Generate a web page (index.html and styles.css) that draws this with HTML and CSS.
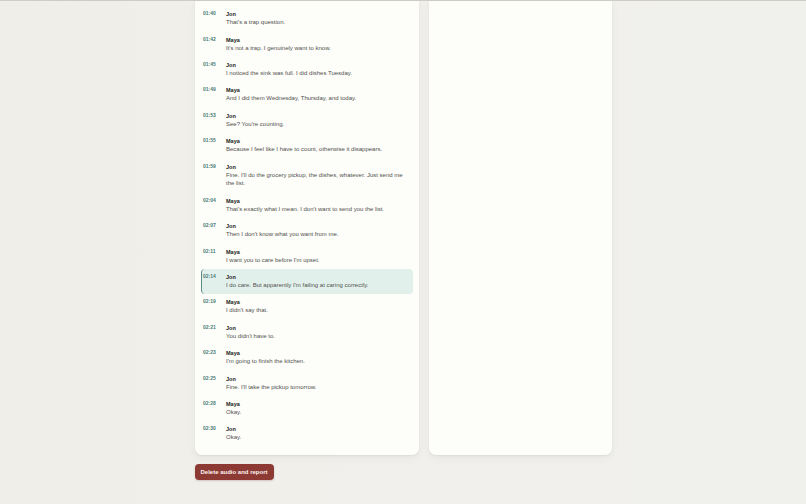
FILE: index.html
```html
<!DOCTYPE html>
<html lang="en">
<head>
<meta charset="utf-8">
<title>Transcript</title>
<link rel="stylesheet" href="styles.css">
</head>
<body>
<div class="topline"></div>
<main class="page">
  <div class="columns">
    <section class="card transcript">
      <div class="row"><span class="time">01:40</span><div class="msg"><div class="name">Jon</div><div class="text">That's a trap question.</div></div></div>
      <div class="row"><span class="time">01:42</span><div class="msg"><div class="name">Maya</div><div class="text">It's not a trap. I genuinely want to know.</div></div></div>
      <div class="row"><span class="time">01:45</span><div class="msg"><div class="name">Jon</div><div class="text">I noticed the sink was full. I did dishes Tuesday.</div></div></div>
      <div class="row"><span class="time">01:49</span><div class="msg"><div class="name">Maya</div><div class="text">And I did them Wednesday, Thursday, and today.</div></div></div>
      <div class="row"><span class="time">01:53</span><div class="msg"><div class="name">Jon</div><div class="text">See? You're counting.</div></div></div>
      <div class="row"><span class="time">01:55</span><div class="msg"><div class="name">Maya</div><div class="text">Because I feel like I have to count, otherwise it disappears.</div></div></div>
      <div class="row"><span class="time">01:59</span><div class="msg"><div class="name">Jon</div><div class="text">Fine. I'll do the grocery pickup, the dishes, whatever. Just send me the list.</div></div></div>
      <div class="row"><span class="time">02:04</span><div class="msg"><div class="name">Maya</div><div class="text">That's exactly what I mean. I don't want to send you the list.</div></div></div>
      <div class="row"><span class="time">02:07</span><div class="msg"><div class="name">Jon</div><div class="text">Then I don't know what you want from me.</div></div></div>
      <div class="row"><span class="time">02:11</span><div class="msg"><div class="name">Maya</div><div class="text">I want you to care before I'm upset.</div></div></div>
      <div class="row active"><span class="time">02:14</span><div class="msg"><div class="name">Jon</div><div class="text">I do care. But apparently I'm failing at caring correctly.</div></div></div>
      <div class="row"><span class="time">02:19</span><div class="msg"><div class="name">Maya</div><div class="text">I didn't say that.</div></div></div>
      <div class="row"><span class="time">02:21</span><div class="msg"><div class="name">Jon</div><div class="text">You didn't have to.</div></div></div>
      <div class="row"><span class="time">02:23</span><div class="msg"><div class="name">Maya</div><div class="text">I'm going to finish the kitchen.</div></div></div>
      <div class="row"><span class="time">02:25</span><div class="msg"><div class="name">Jon</div><div class="text">Fine. I'll take the pickup tomorrow.</div></div></div>
      <div class="row"><span class="time">02:28</span><div class="msg"><div class="name">Maya</div><div class="text">Okay.</div></div></div>
      <div class="row"><span class="time">02:30</span><div class="msg"><div class="name">Jon</div><div class="text">Okay.</div></div></div>
    </section>
    <aside class="card side"></aside>
  </div>
  <div class="actions">
    <button class="danger" type="button">Delete audio and report</button>
  </div>
</main>
</body>
</html>
```

FILE: styles.css
```css
html, body {
  margin: 0;
  padding: 0;
}

body {
  background: linear-gradient(90deg, #efeee9 0%, #f1f0ec 50%, #f0f0ec 100%);
  font-family: "Liberation Sans", Arial, sans-serif;
  color: #2b2b2b;
  min-height: 504px;
}

.topline {
  height: 1px;
  background: #cdccc5;
}

.page {
  width: 417px;
  margin: 0 auto;
}

.columns {
  display: grid;
  grid-template-columns: 224px 183px;
  gap: 10px;
}

.card {
  background: #fdfdf9;
  border-radius: 0 0 7px 7px;
  box-shadow: 0 1px 2px rgba(40, 40, 30, 0.06), 0 3px 10px rgba(40, 40, 30, 0.05);
}

.transcript {
  padding: 5px 6px 8.4px;
}

.row {
  display: flex;
  align-items: flex-start;
  padding: 4.3px 4px 4.3px 1.5px;
  border-left: 1.5px solid transparent;
  border-radius: 4px;
}

.row.active {
  background: #e2f0ec;
  border-left-color: #5d8c86;
}

.time {
  flex: none;
  width: 23px;
  font-size: 5px;
  line-height: 7px;
  font-weight: 700;
  color: #4a7c76;
}

.msg {
  flex: 1;
  min-width: 0;
}

.name {
  font-size: 5.5px;
  line-height: 8px;
  font-weight: 700;
  color: #222220;
}

.text {
  font-size: 6px;
  line-height: 8.8px;
  color: #51514e;
}

.actions {
  display: flex;
  padding-top: 9px;
}

.danger {
  height: 16px;
  padding: 0 6px;
  border: none;
  border-radius: 4px;
  background: #8d3a34;
  color: #fbf3f1;
  font-family: "Liberation Sans", Arial, sans-serif;
  font-size: 6px;
  font-weight: 700;
  box-shadow: 0 1px 2px rgba(80, 20, 15, 0.2);
}
```
